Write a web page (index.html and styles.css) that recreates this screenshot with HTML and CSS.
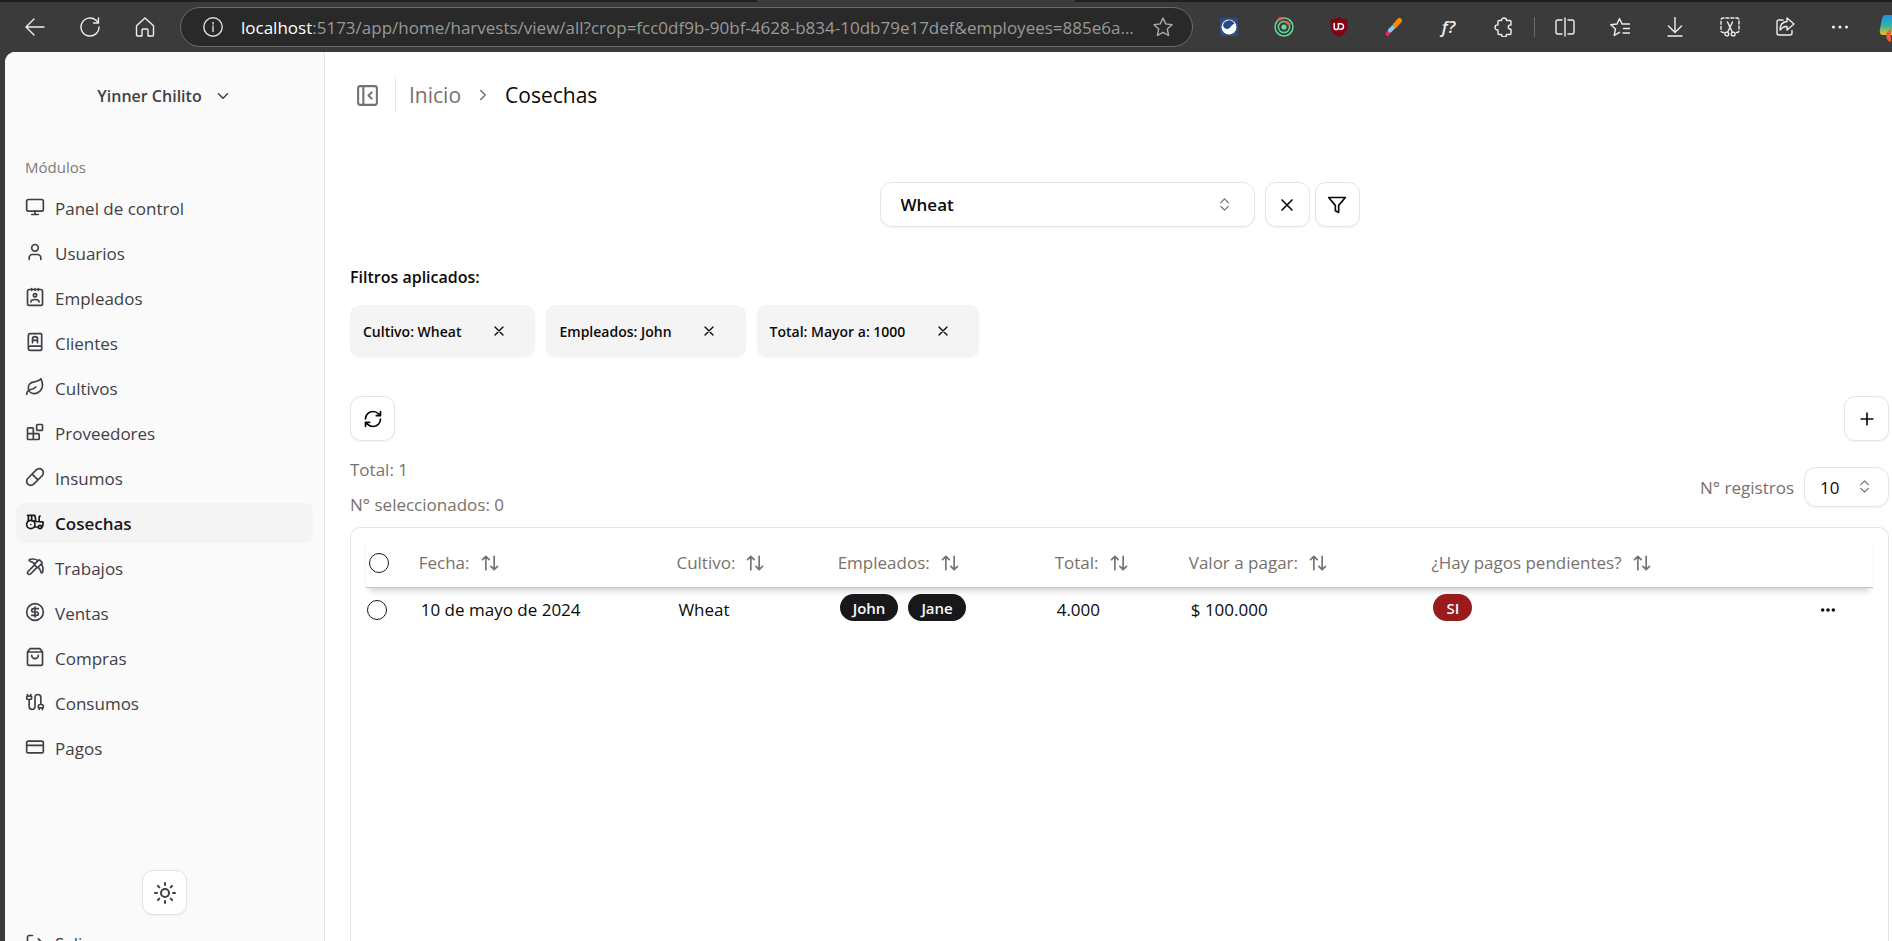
FILE: index.html
```html
<!DOCTYPE html>
<html lang="es">
<head>
<meta charset="utf-8">
<title>Cosechas</title>
<link rel="stylesheet" href="styles.css">
</head>
<body>
<svg class="sprite" aria-hidden="true">
  <symbol id="sort" viewBox="0 0 24 24"><path d="m21 16-4 4-4-4M17 20V4M3 8l4-4 4 4M7 4v16"/></symbol>
  <symbol id="close" viewBox="0 0 24 24"><path d="M18 6 6 18M6 6l12 12"/></symbol>
  <symbol id="updown" viewBox="0 0 24 24"><path d="m6 9 6-6 6 6M6 15l6 6 6-6"/></symbol>
</svg>

<header class="browser">
  <div class="tab-strip"><span class="tab-active"></span></div>
  <div class="toolbar">
    <button class="tool" aria-label="Atrás"><svg class="ico20" viewBox="0 0 20 20"><path d="M19 10H1M9 2l-8 8 8 8"/></svg></button>
    <button class="tool" aria-label="Actualizar"><svg class="ico20" viewBox="0 0 20 20"><path d="M19 10a9 9 0 1 1-3-6.700L18.500 5.500M18.500 1v5h-5"/></svg></button>
    <button class="tool" aria-label="Inicio"><svg class="ico20" viewBox="0 0 20 20"><path d="M1.500 8.800 10 1l8.500 7.800V18q0 1-1 1H13v-6q0-1-1-1H8q-1 0-1 1v6H2.500q-1 0-1-1z"/></svg></button>
    <div class="address">
      <svg class="ico20" viewBox="0 0 20 20"><circle cx="10" cy="10" r="9.200"/><path d="M10 9v5.500M10 5.500v1.600"/></svg>
      <span class="url"><span class="host">localhost</span>:5173/app/home/harvests/view/all?crop=fcc0df9b-90bf-4628-b834-10db79e17def&amp;employees=885e6a...</span>
      <button class="star" aria-label="Favorito"><svg class="ico20" viewBox="0 0 20 20"><path d="m10 1 2.700 5.900 6.300.8-4.700 4.300 1.300 6.500L10 15.300l-5.600 3.200L5.700 12 1 7.700l6.300-.8z"/></svg></button>
    </div>
    <div class="extensions">
      <button class="tool" aria-label="Extensión"><svg class="ico20 solid" viewBox="0 0 20 20"><rect x="1" y="1" width="18" height="18" fill="#2c4a86"/><circle cx="10" cy="10" r="7.500" fill="#fff"/><path d="M4 9a6 6 0 0 1 11.500-2C14 7 13 8 12 9.500 10 12.500 6 13 4 9z" fill="#2c4a86"/></svg></button>
      <button class="tool" aria-label="Extensión"><svg class="ico20" viewBox="0 0 20 20"><g stroke="#5fd998" stroke-width="1.500"><circle cx="10" cy="10" r="9"/><circle cx="10" cy="10" r="5.600"/></g><circle cx="10" cy="10" r="2.600" fill="#5fe0a0" stroke="none"/><path d="M5 2.200 9 1M13 5.500l2 1.500" stroke="#e0603f" stroke-width="3"/></svg></button>
      <button class="tool" aria-label="Extensión"><svg class="ico20 solid" viewBox="0 0 20 20"><path d="M10 0c3 2 6 2.300 8.500 2.300V9c0 5-3 8.500-8.500 11C4.500 17.500 1.500 14 1.500 9V2.300C4 2.300 7 2 10 0z" fill="#800412"/><path d="M5.200 6.500v4a2 2 0 0 0 4.200 0v-4M9.400 6.800h2.400a2.500 2.500 0 0 1 0 5.400h-1" fill="none" stroke="#fff" stroke-width="1.500"/></svg></button>
      <button class="tool" aria-label="Extensión"><svg class="ico20" viewBox="0 0 20 20"><path d="m3.500 17 2.500-4" stroke="#e02a6a" stroke-width="4"/><path d="m6 13.500 5-5" stroke="#8cc6f2" stroke-width="4"/><path d="m11.500 8 4-4.500" stroke="#f58a07" stroke-width="5"/></svg></button>
      <button class="tool fx" aria-label="Extensión">f?</button>
      <button class="tool" aria-label="Extensiones"><svg class="ico20" viewBox="0 0 20 20"><path d="M5 3.500h2.500a2.500 2.500 0 0 1 5 0H16q1 0 1 1V8h-.6a2.100 2.100 0 0 0 0 4.200h.6v4.300q0 1-1 1h-3.500a2.500 2.500 0 0 1-5 0H5q-1 0-1-1v-3.600h-.5a2.500 2.500 0 1 1 0-5H4V4.500q0-1 1-1z"/></svg></button>
      <span class="tool-divider"></span>
      <button class="tool" aria-label="Pantalla dividida"><svg class="ico20" viewBox="0 0 20 20"><path d="M7 3H3Q1 3 1 5v10q0 2 2 2h4M13 3h4q2 0 2 2v10q0 2-2 2h-4M10 1v18"/></svg></button>
      <button class="tool" aria-label="Favoritos"><svg class="ico20" viewBox="0 0 20 20"><path d="M12 7h7.500M13.500 11.500h6M13 16h6.500M12 7 9.500 1.500 7 7l-6.200.8L5.500 12l-1.300 6.500L9.500 15.300M12 7l1 .1"/></svg></button>
      <button class="tool" aria-label="Descargas"><svg class="ico20" viewBox="0 0 20 20"><path d="M10 .5V15M3.500 9l6.500 6.500L16.500 9M3 19h14"/></svg></button>
      <button class="tool" aria-label="Captura"><svg class="ico20" viewBox="0 0 20 20"><path stroke-dasharray="3 2" d="M4 15.500H3q-2 0-2-2V3q0-2 2-2h14q2 0 2 2v10.500q0 2-2 2h-1"/><path d="m7.500 5 5 10.500M12.500 5l-5 10.500"/><circle cx="6.800" cy="17" r="1.900"/><circle cx="13.200" cy="17" r="1.900"/></svg></button>
      <button class="tool" aria-label="Compartir"><svg class="ico20" viewBox="0 0 20 20"><path d="M8 3H4Q2 3 2 5v11q0 2 2 2h11q2 0 2-2v-2.500M12 1l7 6-7 6V9.500q-4-.5-7 3.500 0-8 7-8.500z"/></svg></button>
      <button class="tool" aria-label="Más"><svg class="ico20 solid" viewBox="0 0 20 20"><g fill="#eee"><circle cx="3.500" cy="10" r="1.600"/><circle cx="10" cy="10" r="1.600"/><circle cx="16.500" cy="10" r="1.600"/></g></svg></button>
      <span class="copilot"><svg viewBox="0 0 24 28"><defs><linearGradient id="cp" x1="0" y1="0" x2="0" y2="1"><stop offset="0" stop-color="#1d8fe8"/><stop offset=".55" stop-color="#37b5a0"/><stop offset="1" stop-color="#f1c40f"/></linearGradient></defs><path d="M6 1h18v5L13 21H4q-4 0-3-6L3 5q1-4 3-4z" fill="url(#cp)"/><path d="m7 19 5-4v13q-5 0-5-9z" fill="#ee5a3a"/></svg></span>
    </div>
  </div>
</header>

<div class="app">
  <aside class="sidebar">
    <button class="user">Yinner Chilito <svg class="line" viewBox="0 0 24 24"><path d="m6 9 6 6 6-6"/></svg></button>
    <h2 class="group">Módulos</h2>
    <nav class="nav">
      <a href="#"><svg class="line" viewBox="0 0 24 24"><rect x="2" y="3" width="20" height="14" rx="2"/><path d="M8 21h8M12 17v4"/></svg>Panel de control</a>
      <a href="#"><svg class="line" viewBox="0 0 24 24"><path d="M19 21v-2a4 4 0 0 0-4-4H9a4 4 0 0 0-4 4v2"/><circle cx="12" cy="7" r="4"/></svg>Usuarios</a>
      <a href="#"><svg class="line" viewBox="0 0 24 24"><rect x="3" y="3" width="18" height="19" rx="2"/><path d="M8 2v2M12 2v2M16 2v2M7 18q0-3 5-3t5 3"/><circle cx="12" cy="10" r="2"/></svg>Empleados</a>
      <a href="#"><svg class="line" viewBox="0 0 24 24"><path d="M4 19.500v-15A2.500 2.500 0 0 1 6.500 2H19a1 1 0 0 1 1 1v18a1 1 0 0 1-1 1H6.500a1 1 0 0 1 0-5H20M9 13V8.500a3 3 0 0 1 6 0V13M9 10h6"/></svg>Clientes</a>
      <a href="#"><svg class="line" viewBox="0 0 24 24"><path d="M11 20A7 7 0 0 1 9.800 6.100C15.500 5 17 4.480 19 2c1 2 2 4.180 2 8 0 5.500-4.780 10-10 10Z"/><path d="M2 21c0-3 1.850-5.360 5.080-6C9.500 14.520 12 13 13 12"/></svg>Cultivos</a>
      <a href="#"><svg class="line" viewBox="0 0 24 24"><rect width="7" height="7" x="14" y="3" rx="1"/><path d="M10 21V8a1 1 0 0 0-1-1H4a1 1 0 0 0-1 1v12a1 1 0 0 0 1 1h12a1 1 0 0 0 1-1v-5a1 1 0 0 0-1-1H3"/></svg>Proveedores</a>
      <a href="#"><svg class="line" viewBox="0 0 24 24"><path d="m10.500 20.500 10-10a4.950 4.950 0 1 0-7-7l-10 10a4.950 4.950 0 1 0 7 7ZM8.500 8.500l7 7"/></svg>Insumos</a>
      <a href="#" class="active" aria-current="page"><svg class="line" viewBox="0 0 24 24"><path d="m10 11 11 .9a1 1 0 0 1 .8 1.100l-.665 4.158a1 1 0 0 1-.988.842H20M16 18h-5M18 5a1 1 0 0 0-1 1v5.573M3 4h8.129a1 1 0 0 1 .99.863L13 11.246M4 11V4M7 15h.01M8 10.100V4"/><circle cx="18" cy="18" r="2"/><circle cx="7" cy="15" r="5"/></svg>Cosechas</a>
      <a href="#"><svg class="line" viewBox="0 0 24 24"><path d="M14.531 12.469 6.619 20.380a1 1 0 1 1-3-3l7.912-7.912M15.686 4.314A12.500 12.500 0 0 0 5.461 2.958 1 1 0 0 0 5.580 4.710a22 22 0 0 1 6.318 3.393"/><path d="M17.700 3.700a1 1 0 0 0-1.400 0l-4.600 4.600a1 1 0 0 0 0 1.400l2.600 2.600a1 1 0 0 0 1.400 0l4.600-4.600a1 1 0 0 0 0-1.400zM19.686 8.314a12.501 12.501 0 0 1 1.356 10.225 1 1 0 0 1-1.751-.119 22 22 0 0 0-3.393-6.319"/></svg>Trabajos</a>
      <a href="#"><svg class="line" viewBox="0 0 24 24"><circle cx="12" cy="12" r="10"/><path d="M16 8h-6a2 2 0 1 0 0 4h4a2 2 0 1 1 0 4H8M12 18V6"/></svg>Ventas</a>
      <a href="#"><svg class="line" viewBox="0 0 24 24"><path d="M6 2 3 6v14a2 2 0 0 0 2 2h14a2 2 0 0 0 2-2V6l-3-4ZM3 6h18M16 10a4 4 0 0 1-8 0"/></svg>Compras</a>
      <a href="#"><svg class="line" viewBox="0 0 24 24"><path d="M17 21v-2a1 1 0 0 1-1-1v-1a2 2 0 0 1 2-2h2a2 2 0 0 1 2 2v1a1 1 0 0 1-1 1v2M19 15V6.500a3.500 3.500 0 0 0-7 0v11a3.500 3.500 0 0 1-7 0V9M21 21v-2h-4M3 5h4V3M7 5a1 1 0 0 1 1 1v1a2 2 0 0 1-2 2H4a2 2 0 0 1-2-2V6a1 1 0 0 1 1-1V3"/></svg>Consumos</a>
      <a href="#"><svg class="line" viewBox="0 0 24 24"><rect width="20" height="14" x="2" y="5" rx="2"/><path d="M2 10h20"/></svg>Pagos</a>
    </nav>
    <div class="sidebar-foot">
      <button class="icon-btn" aria-label="Tema"><svg class="line" viewBox="0 0 24 24"><circle cx="12" cy="12" r="4"/><path d="M12 2v2M12 20v2M4.930 4.930l1.410 1.410M17.660 17.660l1.410 1.410M2 12h2M20 12h2M6.340 17.660l-1.410 1.410M19.070 4.930l-1.410 1.410"/></svg></button>
      <nav class="nav"><a href="#"><svg class="line" viewBox="0 0 24 24"><path d="M9 21H5a2 2 0 0 1-2-2V5a2 2 0 0 1 2-2h4M16 17l5-5-5-5M21 12H9"/></svg>Salir</a></nav>
    </div>
  </aside>

  <main class="main">
    <div class="crumbs">
      <button class="panel-toggle" aria-label="Barra lateral"><svg class="line" viewBox="0 0 24 24"><rect x="3" y="3" width="18" height="18" rx="2"/><path d="M8 3v18M16 15l-3-3 3-3"/></svg></button>
      <nav class="trail"><a href="#">Inicio</a><svg class="line" viewBox="0 0 24 24"><path d="m9 18 6-6-6-6"/></svg><span class="here">Cosechas</span></nav>
    </div>

    <section class="search">
      <div class="select-wrap crop"><select aria-label="Cultivo"><option>Wheat</option></select><svg class="line"><use href="#updown"/></svg></div>
      <div class="pair">
        <button class="icon-btn" aria-label="Limpiar"><svg class="line"><use href="#close"/></svg></button>
        <button class="icon-btn" aria-label="Filtrar"><svg class="line" viewBox="0 0 24 24"><path d="M22 3H2l8 9.460V19l4 2v-8.540L22 3z"/></svg></button>
      </div>
    </section>

    <section class="filters">
      <h3>Filtros aplicados:</h3>
      <div class="chips">
        <span class="chip">Cultivo: Wheat<button aria-label="Quitar"><svg class="line"><use href="#close"/></svg></button></span>
        <span class="chip">Empleados: John<button aria-label="Quitar"><svg class="line"><use href="#close"/></svg></button></span>
        <span class="chip">Total: Mayor a: 1000<button aria-label="Quitar"><svg class="line"><use href="#close"/></svg></button></span>
      </div>
    </section>

    <div class="actions">
      <button class="icon-btn" aria-label="Recargar"><svg class="line" viewBox="0 0 24 24"><path d="M3 12a9 9 0 0 1 9-9 9.750 9.750 0 0 1 6.740 2.740L21 8M21 3v5h-5M21 12a9 9 0 0 1-9 9 9.750 9.750 0 0 1-6.740-2.740L3 16M8 16H3v5"/></svg></button>
      <button class="icon-btn" aria-label="Crear"><svg class="line" viewBox="0 0 24 24"><path d="M5 12h14M12 5v14"/></svg></button>
    </div>

    <div class="summary">
      <div class="counts"><p>Total: 1</p><p>N° seleccionados: 0</p></div>
      <div class="page-size">
        <label for="rows">N° registros</label>
        <div class="select-wrap rows"><select id="rows"><option>10</option></select><svg class="line"><use href="#updown"/></svg></div>
      </div>
    </div>

    <section class="table-card">
      <table>
        <colgroup><col class="c-check"><col class="c-date"><col class="c-crop"><col class="c-emp"><col class="c-total"><col class="c-value"><col class="c-pend"><col></colgroup>
        <thead>
          <tr>
            <th><input type="checkbox" aria-label="Seleccionar todo"></th>
            <th><button>Fecha: <svg class="line"><use href="#sort"/></svg></button></th>
            <th><button>Cultivo: <svg class="line"><use href="#sort"/></svg></button></th>
            <th><button>Empleados: <svg class="line"><use href="#sort"/></svg></button></th>
            <th><button>Total: <svg class="line"><use href="#sort"/></svg></button></th>
            <th><button>Valor a pagar: <svg class="line"><use href="#sort"/></svg></button></th>
            <th><button>¿Hay pagos pendientes? <svg class="line"><use href="#sort"/></svg></button></th>
            <th></th>
          </tr>
        </thead>
        <tbody>
          <tr>
            <td><input type="checkbox" aria-label="Seleccionar fila"></td>
            <td>10 de mayo de 2024</td>
            <td>Wheat</td>
            <td><div class="badges"><span class="badge">John</span><span class="badge">Jane</span></div></td>
            <td>4.000</td>
            <td>$ 100.000</td>
            <td><div class="badges"><span class="badge danger">SI</span></div></td>
            <td class="more"><button aria-label="Acciones"><svg viewBox="0 0 18 18"><circle cx="3" cy="9" r="2"/><circle cx="9" cy="9" r="2"/><circle cx="15" cy="9" r="2"/></svg></button></td>
          </tr>
        </tbody>
      </table>
    </section>
  </main>
</div>
</body>
</html>
```
FILE: styles.css
```css
* { box-sizing: border-box; }
body {
  margin: 0;
  height: 100vh;
  overflow: hidden;
  display: flex;
  flex-direction: column;
  background: #3b3b3b;
  color: #0c0a09;
  font-family: "Open Sans", "Noto Sans", sans-serif;
  font-size: 17px;
}
button, select, input { font: inherit; color: inherit; margin: 0; }
button { border: 0; padding: 0; background: none; }
h2, h3, p { margin: 0; }
a { color: inherit; text-decoration: none; }
svg { flex: none; display: block; }
.sprite { position: absolute; width: 0; height: 0; }
.line { width: 20px; height: 20px; fill: none; stroke: currentColor; stroke-width: 2; stroke-linecap: round; stroke-linejoin: round; }

/* Browser bar */
.browser { flex: none; background: #3b3b3b; }
.tab-strip { height: 2px; background: #1f1f1f; display: flex; padding-left: 40%; }
.tab-active { width: 28%; background: #3b3b3b; }
.toolbar { display: flex; align-items: center; height: 50px; padding-left: 7px; overflow: hidden; }
.tool { width: 55px; flex: none; display: flex; justify-content: center; align-items: center; color: #eee; }
.ico20 { width: 20px; height: 20px; fill: none; stroke: currentColor; stroke-width: 1.4; stroke-linecap: round; stroke-linejoin: round; }
.solid { stroke: none; }
.address {
  flex: 1;
  min-width: 0;
  height: 40px;
  margin-left: 8px;
  padding: 0 19px 0 22px;
  display: flex;
  align-items: center;
  gap: 18px;
  border: 1px solid #6a6a6a;
  border-radius: 20px;
  background: #292929;
  color: #ddd;
}
.url { flex: 1; min-width: 0; overflow: hidden; white-space: nowrap; color: #999; font-size: 17px; }
.host { color: #fff; }
.star { color: #aaa; }
.extensions { flex: none; display: flex; align-items: center; padding-left: 8px; }
.fx { font-style: italic; font-weight: 600; font-size: 17px; line-height: 20px; }
.tool-divider { width: 1px; height: 20px; margin: 0 2px 0 3px; background: #6a6a6a; }
.copilot { width: 24px; height: 26px; margin-left: 12px; margin-right: -11px; }
.copilot svg { width: 24px; height: 28px; }

/* Application */
.app { flex: 1; min-height: 0; margin-left: 5px; display: flex; background: #fff; border-top-left-radius: 10px; overflow: hidden; }
.sidebar { width: 320px; flex: none; display: flex; flex-direction: column; background: #fafafa; border-right: 1px solid #e5e5e5; color: #3f3f46; overflow: hidden; padding: 0 11px; }
.user { flex: none; height: 46px; margin: 21px 0 28px; display: flex; align-items: center; justify-content: center; gap: 12px; font-size: 16px; font-weight: 600; }
.user .line { width: 18px; height: 18px; }
.group { flex: none; height: 41px; padding: 0 9px; line-height: 40px; font-size: 15px; font-weight: 500; color: #7a7a80; }
.nav { flex: none; display: flex; flex-direction: column; gap: 5px; }
.nav a { height: 40px; padding: 0 9px; display: flex; align-items: center; gap: 10px; border-radius: 8px; font-size: 17px; }
.nav .line { margin-bottom: 3px; }
.nav .active { background: #f4f4f5; color: #18181b; font-weight: 600; }
.sidebar-foot { flex: none; margin-top: 102px; display: flex; flex-direction: column; gap: 8px; }
.sidebar-foot .icon-btn { align-self: center; }
.icon-btn {
  width: 45px;
  height: 45px;
  flex: none;
  display: flex;
  align-items: center;
  justify-content: center;
  border: 1px solid #e5e5e5;
  border-radius: 11px;
  background: #fff;
  box-shadow: 0 1px 2px rgba(0, 0, 0, .05);
}
.sidebar-foot .line { width: 24px; height: 24px; }
.sidebar-foot .nav .line { width: 20px; height: 20px; margin-bottom: 0; }

.main { flex: 1; min-width: 0; display: flex; flex-direction: column; padding: 25px 3px 0 25px; }
.crumbs { height: 36px; display: flex; align-items: center; padding-left: 5px; }
.panel-toggle { padding-right: 15px; height: 36px; border-right: 1px solid #e5e5e5; color: #71717a; }
.panel-toggle .line { width: 25px; height: 25px; }
.trail { display: flex; align-items: center; gap: 13px; padding-left: 13px; font-size: 21px; color: #78716c; }
.trail .line { width: 18px; height: 18px; }
.here { color: #0c0a09; }

.search { margin-top: 69px; display: flex; justify-content: center; gap: 10px; }
.pair { display: flex; gap: 5px; }
.select-wrap { position: relative; }
.select-wrap select { appearance: none; width: 100%; height: 100%; padding: 0 20px; border: 1px solid #e5e5e5; border-radius: 12px; background: #fff; box-shadow: 0 1px 2px rgba(0, 0, 0, .05); }
.select-wrap .line { position: absolute; top: 50%; width: 15px; height: 15px; margin-top: -8px; color: #78716c; pointer-events: none; }
.crop { width: 375px; height: 45px; }
.crop select { font-weight: 600; }
.crop .line { right: 23px; }

.filters { margin-top: 37px; }
.filters h3 { font-size: 16px; line-height: 26px; font-weight: 600; }
.chips { display: flex; gap: 11px; margin-top: 15px; }
.chip { height: 52px; padding: 0 14px 0 13px; display: flex; align-items: center; gap: 15px; border-radius: 10px; background: #f4f4f5; font-size: 14px; font-weight: 600; box-shadow: 0 1px 2px rgba(0, 0, 0, .04); }
.chip button { width: 45px; height: 45px; display: flex; align-items: center; justify-content: center; }
.chip .line { width: 16px; height: 16px; }

.actions { margin-top: 39px; display: flex; justify-content: space-between; }
.summary { margin-top: 11px; display: flex; justify-content: space-between; align-items: center; color: #78716c; font-weight: 500; }
.counts p { line-height: 35px; }
.page-size { display: flex; align-items: center; gap: 10px; }
.rows { width: 85px; height: 40px; color: #0c0a09; }
.rows select { padding: 0 15px; font-weight: 400; }
.rows .line { right: 17px; }

.table-card { flex: 1; min-height: 0; margin-top: 5px; padding: 15px; border: 1px solid #e5e5e5; border-bottom: 0; border-radius: 10px 10px 0 0; }
table { width: 100%; table-layout: fixed; border-collapse: collapse; }
.c-check { width: 3.5%; }
.c-date { width: 17.1%; }
.c-crop { width: 10.7%; }
.c-emp { width: 14.4%; }
.c-total { width: 8.9%; }
.c-value { width: 16.1%; }
.c-pend { width: 23%; }
thead { box-shadow: 0 1px 1px #c4c8c8, 0 9px 5px -4px rgba(0, 0, 0, .14); }
th { height: 44px; padding: 0 0 5px; text-align: left; font-weight: 500; color: #78716c; }
th button { display: flex; align-items: center; gap: 10px; white-space: nowrap; }
td { height: 45px; padding: 0 0 0 2px; }
td:first-child { padding-left: 1px; }
input[type="checkbox"] { appearance: none; display: block; width: 20px; height: 20px; border: 1px solid #18181b; border-radius: 50%; }
th input[type="checkbox"] { margin-left: 3px; }
.badges { display: flex; gap: 10px; padding-bottom: 4px; }
.badge { height: 27px; padding: 0 13px; display: flex; align-items: center; border-radius: 14px; background: #18181b; color: #fafafa; font-size: 15px; font-weight: 600; }
.danger { background: #991b1b; }
.more button { margin-left: auto; margin-right: 37px; display: block; }
.more svg { width: 16px; height: 16px; fill: #0c0a09; }
```
